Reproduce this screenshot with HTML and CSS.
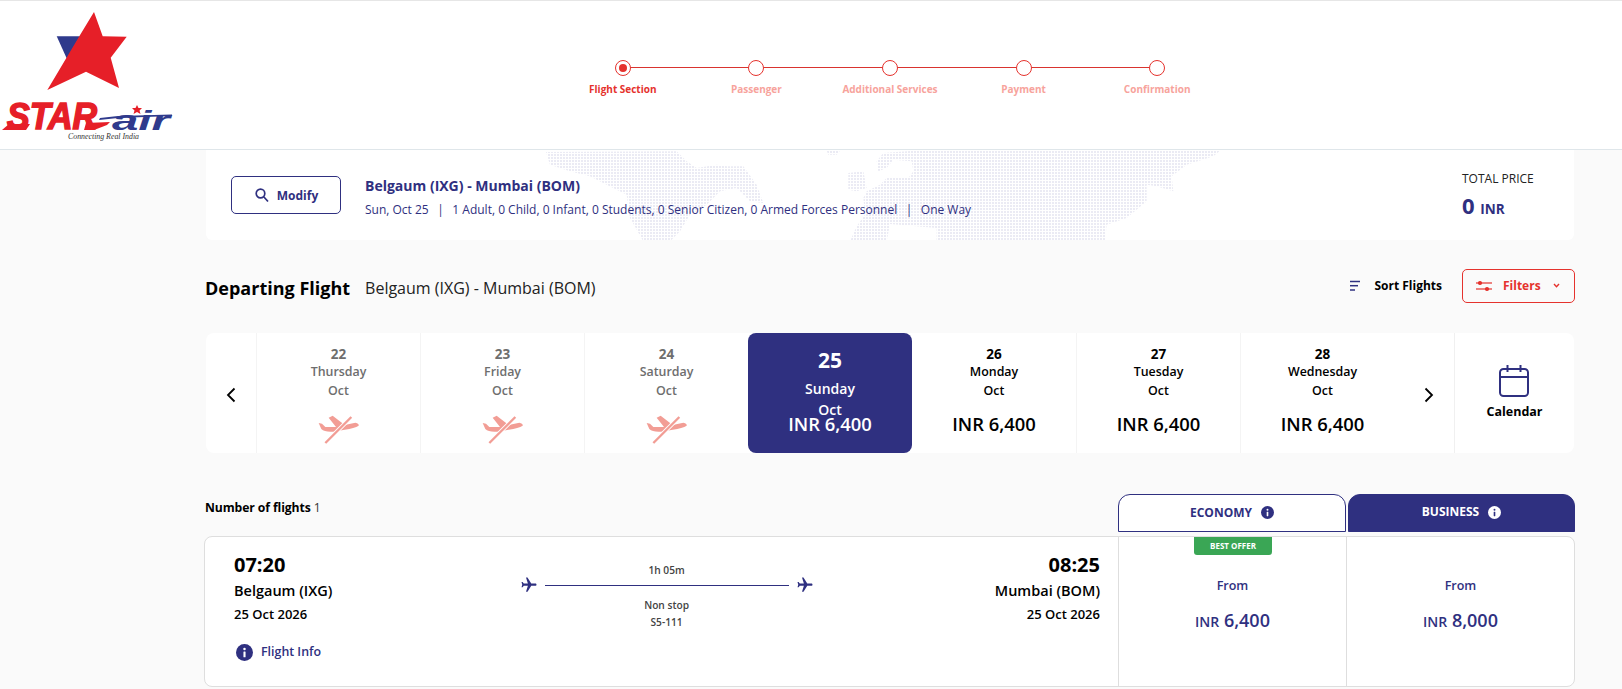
FILE: index.html
```html
<!DOCTYPE html>
<html>
<head>
    <title>Star Air - Flight Section</title>
    <link rel="stylesheet" href="styles.css">
</head>
<body>
    <svg class="icon-defs" width="0" height="0">
        <symbol id="noFlight" viewBox="0 0 180 135">
            <path fill="#f29d95" d="M26 54 L36 56 L46 66 L78 66 L56 38 L68 32 L104 60 L136 53 Q148 56 146 62 Q134 70 104 74 L70 80 Q44 82 34 72Z"/>
            <line x1="124" y1="36" x2="46" y2="114" stroke="#fff" stroke-width="12"/>
            <line x1="124" y1="36" x2="46" y2="114" stroke="#f29d95" stroke-width="7"/>
        </symbol>
        <symbol id="plane" viewBox="0 0 24 24">
            <path transform="rotate(90 12 12)" fill="#2f3080" d="M21 16v-2l-8-5V3.5c0-.83-.67-1.5-1.5-1.5S10 2.67 10 3.5V9l-8 5v2l8-2.5V19l-2 1.5V22l3.5-1 3.5 1v-1.5L13 19v-5.5l8 2.5z"/>
        </symbol>
        <symbol id="info" viewBox="0 0 16 16">
            <circle cx="8" cy="8" r="8" fill="currentColor"/>
            <rect x="7" y="7" width="2" height="5.5" rx=".5" fill="var(--info-mark)"/>
            <circle cx="8" cy="4.7" r="1.2" fill="var(--info-mark)"/>
        </symbol>
    </svg>

    <header class="site-header">
        <svg class="logo" width="176" height="145" viewBox="0 0 176 145">
            <polygon fill="#2f3a8c" points="56.7,35.3 80,35.3 67,58"/>
            <polygon fill="#e61f28" points="94,11 102.7,35.3 126.7,35.7 110.7,56.7 119,87 86,70.7 47.3,89 79.3,35.3"/>
            <text class="logo-star" x="7" y="128" textLength="90" lengthAdjust="spacingAndGlyphs">STAR</text>
            <polygon fill="#e61f28" points="2,129 9,123 30,123 26,129"/>
            <polygon fill="#e61f28" points="86,122 110,121 107,124 94,129 84,129"/>
            <polygon fill="#2f3a8c" points="100,117 118,115 172,113.5 172,115 118,117 99,119"/>
            <polygon fill="#e61f28" points="137,104 138.5,107 142,107 139.5,109.5 140.5,113 137,111 133.5,113 134.5,109.5 132,107 135.5,107"/>
            <text class="logo-air" x="112" y="129" textLength="58" lengthAdjust="spacingAndGlyphs">air</text>
            <text class="logo-tag" x="68" y="138" textLength="71" lengthAdjust="spacingAndGlyphs">Connecting Real India</text>
        </svg>
        <ol class="stepper">
            <li class="step active"><span class="step-dot"></span><span class="step-label">Flight Section</span></li>
            <li class="step"><span class="step-dot"></span><span class="step-label">Passenger</span></li>
            <li class="step"><span class="step-dot"></span><span class="step-label">Additional Services</span></li>
            <li class="step"><span class="step-dot"></span><span class="step-label">Payment</span></li>
            <li class="step"><span class="step-dot"></span><span class="step-label">Confirmation</span></li>
        </ol>
    </header>

    <main class="page">
        <section class="summary">
            <svg class="summary-map" width="710" height="95" viewBox="0 0 2130 285">
                <defs>
                    <pattern id="dots" width="9" height="9" patternUnits="userSpaceOnUse">
                        <rect width="6" height="6" fill="#ebebf4"/>
                    </pattern>
                </defs>
                <g fill="url(#dots)">
                    <polygon points="48,12 440,10 470,40 500,60 560,50 590,55 640,55 680,110 700,165 660,160 620,120 570,130 530,170 480,200 450,250 420,280 340,280 300,210 290,140 230,110 180,85 120,70 60,50"/>
                    <polygon points="890,8 930,8 920,20 895,20"/>
                    <polygon points="955,75 1000,70 1010,120 980,130 955,125"/>
                    <polygon points="1040,40 1060,15 1150,8 2070,8 2050,25 1970,50 1925,85 1930,130 1880,115 1850,110 1850,160 1790,210 1730,230 1725,280 1220,280 1220,240 1080,228 1070,280 960,280 980,235 1005,200 1000,150 1010,130 1050,110 1070,90 1135,90 1150,70 1145,40 1090,35 1070,60 1045,70"/>
                </g>
            </svg>
            <button class="modify-btn">
                <svg width="16" height="16" viewBox="0 0 16 16" fill="none" stroke="#2f3080" stroke-width="1.7">
                    <circle cx="6.5" cy="6.5" r="4.3"/>
                    <line x1="9.7" y1="9.7" x2="14" y2="14.5"/>
                </svg>
                Modify
            </button>
            <div class="summary-text">
                <div class="route">Belgaum (IXG) - Mumbai (BOM)</div>
                <div class="trip">Sun, Oct 25<span class="sep">|</span>1 Adult, 0 Child, 0 Infant, 0 Students, 0 Senior Citizen, 0 Armed Forces Personnel<span class="sep">|</span>One Way</div>
            </div>
            <div class="total">
                <div class="total-label">TOTAL PRICE</div>
                <div class="total-value">0 <small>INR</small></div>
            </div>
        </section>

        <section class="flight-head">
            <h2>Departing Flight</h2>
            <span class="flight-head-route">Belgaum (IXG) - Mumbai (BOM)</span>
            <div class="sort">
                <svg width="12" height="12" viewBox="0 0 12 12" stroke="#2f3080" stroke-width="1.5">
                    <line x1="1" y1="1.5" x2="11" y2="1.5"/>
                    <line x1="1" y1="5.7" x2="9" y2="5.7"/>
                    <line x1="1" y1="10" x2="6" y2="10"/>
                </svg>
                <span>Sort Flights</span>
            </div>
            <button class="filter-btn">
                <svg width="16" height="12" viewBox="0 0 16 12" stroke="#e5322d" stroke-width="1.2" fill="#e5322d">
                    <line x1="0" y1="3" x2="16" y2="3"/>
                    <line x1="0" y1="9" x2="16" y2="9"/>
                    <circle cx="4" cy="3" r="1.5"/>
                    <circle cx="11" cy="9" r="1.5"/>
                </svg>
                <span>Filters</span>
                <svg class="caret" width="7" height="5" viewBox="0 0 7 5" fill="none" stroke="#e5322d" stroke-width="1.4">
                    <polyline points="1,1 3.5,3.7 6,1"/>
                </svg>
            </button>
        </section>

        <section class="dates">
            <div class="date-arrow date-arrow-prev">
                <svg width="10" height="16" viewBox="0 0 10 16" fill="none" stroke="#000" stroke-width="1.8"><polyline points="8.5,1.5 2,8 8.5,14.5"/></svg>
            </div>
            <div class="date-cell off">
                <div class="day-num">22</div><div class="day-text">Thursday</div><div class="day-text">Oct</div>
                <svg class="no-flight"><use href="#noFlight"/></svg>
            </div>
            <div class="date-cell off">
                <div class="day-num">23</div><div class="day-text">Friday</div><div class="day-text">Oct</div>
                <svg class="no-flight"><use href="#noFlight"/></svg>
            </div>
            <div class="date-cell off">
                <div class="day-num">24</div><div class="day-text">Saturday</div><div class="day-text">Oct</div>
                <svg class="no-flight"><use href="#noFlight"/></svg>
            </div>
            <div class="date-cell selected">
                <div class="day-num">25</div><div class="day-text">Sunday</div><div class="day-text">Oct</div>
                <div class="day-price">INR 6,400</div>
            </div>
            <div class="date-cell">
                <div class="day-num">26</div><div class="day-text">Monday</div><div class="day-text">Oct</div>
                <div class="day-price">INR 6,400</div>
            </div>
            <div class="date-cell">
                <div class="day-num">27</div><div class="day-text">Tuesday</div><div class="day-text">Oct</div>
                <div class="day-price">INR 6,400</div>
            </div>
            <div class="date-cell">
                <div class="day-num">28</div><div class="day-text">Wednesday</div><div class="day-text">Oct</div>
                <div class="day-price">INR 6,400</div>
            </div>
            <div class="date-arrow date-arrow-next">
                <svg width="10" height="16" viewBox="0 0 10 16" fill="none" stroke="#000" stroke-width="1.8"><polyline points="1.5,1.5 8,8 1.5,14.5"/></svg>
            </div>
            <div class="calendar">
                <svg width="30" height="34" viewBox="0 0 30 34" fill="none" stroke="#2f3080" stroke-width="2">
                    <rect x="1" y="5" width="28" height="27" rx="3.5"/>
                    <line x1="1" y1="13" x2="29" y2="13"/>
                    <line x1="8.5" y1="1" x2="8.5" y2="8"/>
                    <line x1="21.5" y1="1" x2="21.5" y2="8"/>
                </svg>
                <span>Calendar</span>
            </div>
        </section>

        <section class="results-head">
            <div class="flight-count"><b>Number of flights</b> 1</div>
            <div class="fare-tab economy">ECONOMY <svg class="info-icon"><use href="#info"/></svg></div>
            <div class="fare-tab business"><span class="business-label">BUSINESS</span> <svg class="info-icon"><use href="#info"/></svg></div>
        </section>

        <section class="flight-card">
            <div class="flight-info">
                <div class="leg">
                    <div class="leg-time">07:20</div>
                    <div class="leg-city">Belgaum (IXG)</div>
                    <div class="leg-date">25 Oct 2026</div>
                    <div class="flight-link"><svg class="info-icon"><use href="#info"/></svg>Flight Info</div>
                </div>
                <div class="path">
                    <div class="path-duration">1h 05m</div>
                    <div class="path-line">
                        <svg width="18" height="18"><use href="#plane"/></svg>
                        <span class="path-rule"></span>
                        <svg width="18" height="18"><use href="#plane"/></svg>
                    </div>
                    <div class="path-note">Non stop</div>
                    <div class="path-note">S5-111</div>
                </div>
                <div class="leg leg-end">
                    <div class="leg-time">08:25</div>
                    <div class="leg-city">Mumbai (BOM)</div>
                    <div class="leg-date">25 Oct 2026</div>
                </div>
            </div>
            <div class="fare">
                <span class="offer">BEST OFFER</span>
                <div class="fare-from">From</div>
                <div class="fare-price"><small>INR</small> 6,400</div>
            </div>
            <div class="fare">
                <div class="fare-from">From</div>
                <div class="fare-price"><small>INR</small> 8,000</div>
            </div>
        </section>
    </main>
</body>
</html>
```

FILE: styles.css
```css
* {
    box-sizing: border-box;
}

html, body {
    margin: 0;
    height: 689px;
    overflow: hidden;
}

body {
    background: #fafafa;
    font-family: "Open Sans", Arial, sans-serif;
    color: #000;
}

.icon-defs {
    position: absolute;
}

button {
    font-family: inherit;
    background: none;
    cursor: pointer;
}

/* Header */
.site-header {
    display: flex;
    height: 150px;
    background: #fff;
    border-top: 1px solid #e6e6e6;
    border-bottom: 1px solid #dfe6ea;
}

.logo {
    flex: none;
    display: block;
}

.logo-star {
    font: italic 900 37px "Liberation Sans", Arial, sans-serif;
    fill: #e61f28;
    stroke: #e61f28;
    stroke-width: 1.6;
}

.logo-air {
    font: italic 700 27px "Liberation Sans", Arial, sans-serif;
    fill: #2f3a8c;
}

.logo-tag {
    font: italic 400 8px "Liberation Serif", serif;
    fill: #333;
}

.stepper {
    display: flex;
    list-style: none;
    margin: 59px 0 0 380px;
    padding: 0;
}

.step {
    position: relative;
    width: 133.6px;
    display: flex;
    flex-direction: column;
    align-items: center;
}

.step:not(:last-child)::before {
    content: "";
    position: absolute;
    top: 7px;
    left: 50%;
    width: 100%;
    height: 1px;
    background: #d9342f;
}

.step-dot {
    position: relative;
    width: 16px;
    height: 16px;
    border: 1px solid #e5322d;
    border-radius: 50%;
    background: #fff;
}

.step.active .step-dot::after {
    content: "";
    position: absolute;
    inset: 3px;
    border-radius: 50%;
    background: #e5322d;
}

.step-label {
    margin-top: 6px;
    font-size: 10px;
    line-height: 15px;
    font-weight: 700;
    color: #f7a39c;
    white-space: nowrap;
}

.step.active .step-label {
    color: #e5322d;
}

/* Page */
.page {
    padding: 0 47px 0 205px;
}

.summary {
    position: relative;
    display: flex;
    align-items: center;
    height: 90px;
    margin: 0 1px;
    padding: 0 38px 0 25px;
    background: #fff;
    border-radius: 0 0 6px 6px;
    overflow: hidden;
    color: #2f3080;
}

.summary-map {
    position: absolute;
    left: 324px;
    top: -2px;
}

.modify-btn {
    position: relative;
    display: flex;
    align-items: center;
    justify-content: center;
    gap: 7px;
    width: 110px;
    height: 38px;
    border: 1px solid #2f3080;
    border-radius: 5px;
    color: #2f3080;
    font-size: 12px;
    font-weight: 700;
}

.summary-text {
    position: relative;
    margin-left: 24px;
    padding-top: 5px;
}

.route {
    font-size: 14px;
    line-height: 18px;
    font-weight: 700;
}

.trip {
    margin-top: 6px;
    font-size: 12px;
    line-height: 18px;
    white-space: nowrap;
}

.sep {
    margin: 0 8.5px;
}

.total {
    position: relative;
    margin-left: auto;
    padding-top: 4px;
    width: 74px;
}

.total-label {
    font-size: 12px;
    line-height: 18px;
    color: #222;
    white-space: nowrap;
}

.total-value {
    margin-top: 2px;
    font-size: 22px;
    line-height: 30px;
    font-weight: 700;
}

.total-value small {
    font-size: 13.5px;
}

.flight-head {
    display: flex;
    align-items: center;
    margin-top: 29px;
    height: 33px;
}

.flight-head h2 {
    margin: 0;
    padding-top: 5px;
    font-size: 18px;
    font-weight: 700;
}

.flight-head-route {
    margin-left: 15px;
    padding-top: 5px;
    font-size: 16px;
    color: #222;
}

.sort {
    display: flex;
    align-items: center;
    gap: 13px;
    margin-left: auto;
    font-size: 12px;
    font-weight: 700;
}

.filter-btn {
    display: flex;
    align-items: center;
    width: 113px;
    height: 34px;
    margin-left: 20px;
    padding: 0 0 0 13px;
    border: 1px solid #e5322d;
    border-radius: 5px;
    color: #e5322d;
    font-size: 12px;
    font-weight: 700;
}

.filter-btn span {
    margin-left: 11px;
}

.caret {
    margin-left: 12px;
}

/* Date strip */
.dates {
    display: flex;
    height: 120px;
    margin: 31px 1px 0;
    background: #fff;
    border-radius: 8px;
}

.date-arrow {
    display: flex;
    align-items: center;
    justify-content: center;
    flex: none;
    width: 50px;
    padding-top: 3px;
}

.date-cell {
    width: 164px;
    flex: none;
    display: flex;
    flex-direction: column;
    align-items: center;
    padding-top: 12px;
    border-left: 1px solid #f4f4f4;
}

.day-num {
    font-size: 13.5px;
    line-height: 18px;
    font-weight: 700;
}

.day-text {
    font-size: 12.4px;
    line-height: 18.5px;
    font-weight: 600;
}

.date-cell.off {
    color: #6e6e6e;
}

.no-flight {
    width: 60px;
    height: 45px;
    margin-top: 4.5px;
    margin-left: 2px;
}

.day-price {
    margin-top: 12.5px;
    font-size: 18.4px;
    line-height: 22px;
    font-weight: 600;
}

.date-cell.selected {
    padding-top: 15px;
    background: #2f3080;
    border: 0;
    border-radius: 8px;
    color: #fff;
}

.date-cell.selected + .date-cell {
    border-left: 0;
}

.selected .day-num {
    font-size: 21px;
    line-height: 24px;
}

.selected .day-text {
    font-size: 14px;
    line-height: 21px;
}

.selected .day-num + .day-text {
    margin-top: 6px;
}

.selected .day-price {
    margin-top: -7px;
}

.calendar {
    flex: 1;
    display: flex;
    flex-direction: column;
    align-items: center;
    padding: 31px 2px 0 0;
    border-left: 1px solid #f0f0f0;
    font-size: 12.5px;
    font-weight: 700;
}

.calendar span {
    margin: 5px -2px 0 0;
}

/* Fare tabs */
.results-head {
    display: flex;
    height: 38px;
    margin-top: 41px;
}

.flight-count {
    flex: 1;
    padding-top: 5px;
    font-size: 12.2px;
    line-height: 18px;
    color: #333;
}

.flight-count b {
    font-weight: 700;
    color: #000;
    letter-spacing: -.1px;
}

.fare-tab {
    --info-mark: #fff;
    display: flex;
    align-items: center;
    justify-content: center;
    gap: 9px;
    width: 228px;
    padding-bottom: 1px;
    border: 1px solid #2f3080;
    border-radius: 12px 12px 0 0;
    font-size: 12px;
    font-weight: 700;
}

.economy {
    background: #fff;
    color: #2f3080;
}

.business {
    width: 227px;
    margin-left: 2px;
    background: #2f3080;
    color: #fff;
    --info-mark: #2f3080;
}

.business-label {
    margin-top: -2px;
}

.info-icon {
    width: 13px;
    height: 13px;
    flex: none;
}

/* Flight card */
.flight-card {
    display: flex;
    height: 151px;
    margin: 4px 0 0 -1px;
    background: #fff;
    border: 1px solid #dedede;
    border-radius: 8px;
}

.flight-info {
    flex: 1;
    display: flex;
    justify-content: space-between;
    padding: 14px 18px 0 29px;
}

.leg-time {
    font-size: 20px;
    line-height: 27px;
    font-weight: 700;
}

.leg-city {
    margin-top: 3px;
    font-size: 14.5px;
    line-height: 20px;
    font-weight: 600;
}

.leg-date {
    margin-top: 4px;
    font-size: 13px;
    line-height: 18px;
    font-weight: 600;
}

.leg-end {
    text-align: right;
}

.flight-link {
    --info-mark: #fff;
    display: flex;
    align-items: center;
    gap: 8px;
    margin: 19px 0 0 2px;
    color: #2f3080;
    font-size: 12.4px;
    line-height: 20px;
    font-weight: 600;
}

.flight-link .info-icon {
    width: 17px;
    height: 17px;
}

.path {
    display: flex;
    flex-direction: column;
    align-items: center;
    width: 296px;
    margin-left: 6px;
    margin-top: 12px;
    font-size: 10.2px;
    font-weight: 600;
    color: #444;
}

.path-duration {
    line-height: 14px;
}

.path-line {
    display: flex;
    align-items: center;
    gap: 7px;
    height: 16px;
}

.path-rule {
    width: 244px;
    height: 1px;
    background: #2f3080;
}

.path-note {
    line-height: 17px;
}

.path-line + .path-note {
    margin-top: 4px;
}

.fare {
    position: relative;
    width: 228px;
    flex: none;
    display: flex;
    flex-direction: column;
    align-items: center;
    padding-top: 39px;
    border-left: 1px solid #dedede;
    color: #2f3080;
}

.offer {
    position: absolute;
    top: 0;
    left: 75px;
    width: 78px;
    height: 18px;
    background: #3aa655;
    border-radius: 0 0 3px 3px;
    color: #fff;
    font-size: 8px;
    line-height: 18px;
    font-weight: 700;
    text-align: center;
}

.fare-from {
    font-size: 12.5px;
    line-height: 20px;
    font-weight: 600;
}

.fare-price {
    margin-top: 11px;
    font-size: 18px;
    line-height: 26px;
    font-weight: 600;
}

.fare-price small {
    font-size: 14px;
}
```
